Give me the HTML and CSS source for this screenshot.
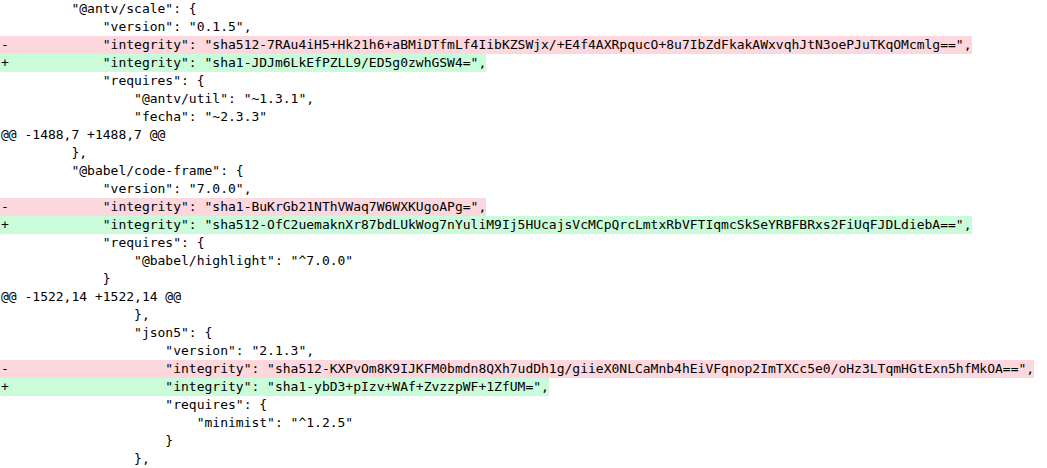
FILE: index.html
```html
<!DOCTYPE html>
<html>
<head>
<meta charset="utf-8">
<link rel="stylesheet" href="styles.css">
</head>
<body>
<div class="diff">
<div class="line">         "@antv/scale": {</div>
<div class="line">             "version": "0.1.5",</div>
<div class="line del">-            "integrity": "sha512-7RAu4iH5+Hk21h6+aBMiDTfmLf4IibKZSWjx/+E4f4AXRpqucO+8u7IbZdFkakAWxvqhJtN3oePJuTKqOMcmlg==",</div>
<div class="line add">+            "integrity": "sha1-JDJm6LkEfPZLL9/ED5g0zwhGSW4=",</div>
<div class="line">             "requires": {</div>
<div class="line">                 "@antv/util": "~1.3.1",</div>
<div class="line">                 "fecha": "~2.3.3"</div>
<div class="line">@@ -1488,7 +1488,7 @@</div>
<div class="line">         },</div>
<div class="line">         "@babel/code-frame": {</div>
<div class="line">             "version": "7.0.0",</div>
<div class="line del">-            "integrity": "sha1-BuKrGb21NThVWaq7W6WXKUgoAPg=",</div>
<div class="line add">+            "integrity": "sha512-OfC2uemaknXr87bdLUkWog7nYuliM9Ij5HUcajsVcMCpQrcLmtxRbVFTIqmcSkSeYRBFBRxs2FiUqFJDLdiebA==",</div>
<div class="line">             "requires": {</div>
<div class="line">                 "@babel/highlight": "^7.0.0"</div>
<div class="line">             }</div>
<div class="line">@@ -1522,14 +1522,14 @@</div>
<div class="line">                 },</div>
<div class="line">                 "json5": {</div>
<div class="line">                     "version": "2.1.3",</div>
<div class="line del">-                    "integrity": "sha512-KXPvOm8K9IJKFM0bmdn8QXh7udDh1g/giieX0NLCaMnb4hEiVFqnop2ImTXCc5e0/oHz3LTqmHGtExn5hfMkOA==",</div>
<div class="line add">+                    "integrity": "sha1-ybD3+pIzv+WAf+ZvzzpWF+1ZfUM=",</div>
<div class="line">                     "requires": {</div>
<div class="line">                         "minimist": "^1.2.5"</div>
<div class="line">                     }</div>
<div class="line">                 },</div>
</div>
</body>
</html>
```
FILE: styles.css
```css
html, body {
  margin: 0;
  padding: 0;
  background: #ffffff;
}
.diff {
  font-family: "DejaVu Sans Mono", "Liberation Mono", monospace;
  font-size: 13px;
  line-height: 18px;
  color: #000000;
}
.line {
  white-space: pre;
  width: fit-content;
  padding-left: 1px;
  padding-right: 0;
  height: 18px;
}
.del {
  background: #fcd8de;
}
.add {
  background: #cbfcda;
}
```
